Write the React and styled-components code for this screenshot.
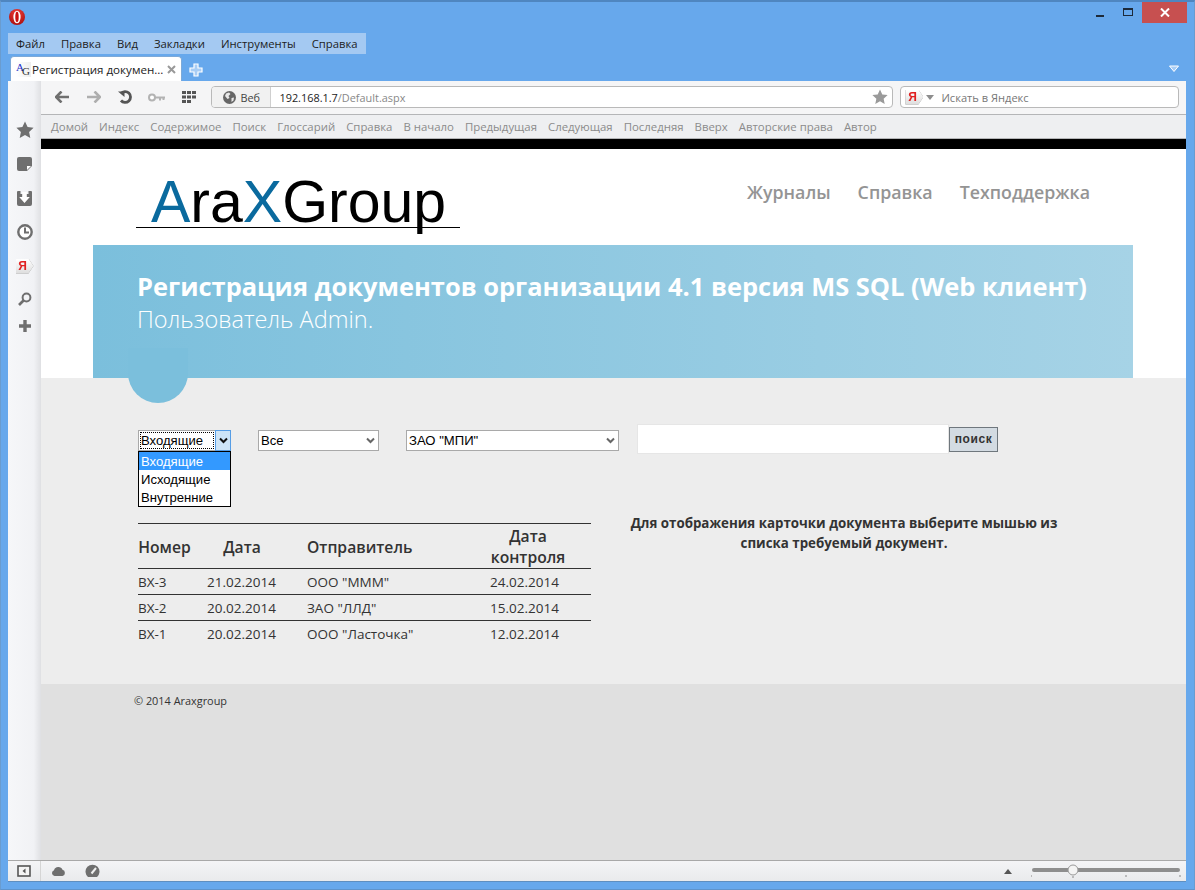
import React from 'react';
import styled, { createGlobalStyle } from 'styled-components';

const Global = createGlobalStyle`
  html, body { margin: 0; padding: 0; height: 100%; overflow: hidden; }
  * { box-sizing: border-box; }
  body { font-family: "Open Sans", "Noto Sans", sans-serif; }
`;

const Window = styled.div`
  width: 1195px; height: 890px; display: flex; flex-direction: column;
  background: #67a8ec; border-top: 2px solid #4f86c0; border-left: 1px solid #6a9ccf;
  border-right: 1px solid #6a9ccf; border-bottom: 1px solid #5f94cc; overflow: hidden;
`;
const TitleBar = styled.div`
  height: 31px; display: flex; justify-content: space-between; padding: 0 7px 0 8px;
`;
const OperaLogo = styled.div`
  width: 16px; height: 16px; margin-top: 7px; display: flex;
`;
const WindowControls = styled.div`
  display: flex; align-items: flex-start; height: 21px; margin-top: 0;
`;
const ControlButton = styled.div`
  width: ${p => p.$w}px; height: 21px; display: flex; align-items: center; justify-content: center;
  background: ${p => p.$close ? '#c75050' : 'transparent'};
`;
const MenuBar = styled.nav`
  margin-left: 7px; width: 358px; height: 21px; background: #a4c9f2; display: flex;
  align-items: center; padding: 0 8px; gap: 16px; font-size: 11.3px; color: #1d1d1d;
`;
const MenuItem = styled.span``;
const TabStrip = styled.div`
  height: 27px; display: flex; align-items: flex-end; padding: 0 14px 0 9px; position: relative;
`;
const Tab = styled.div`
  width: 172px; height: 25px; background: #fff; border-radius: 4px 4px 0 0; display: flex;
  align-items: center; padding: 0 5px 0 5px; font-size: 11.6px; color: #222; white-space: nowrap;
  border: 1px solid #7da9d8; border-bottom: none;
`;
const FavIcon = styled.span`
  width: 15px; height: 15px; flex: none; margin-right: 1px; font-family: "Liberation Serif", serif;
  font-size: 11px; position: relative; display: block; background: linear-gradient(90deg,#fff,#eee);
`;
const FavA = styled.span`position: absolute; left: 0; top: -1px; color: #2230c8;`;
const FavG = styled.span`position: absolute; left: 6px; top: 3px; color: #333;`;
const TabTitle = styled.span`flex: 1; overflow: hidden;`;
const NewTab = styled.div`margin: 0 0 4px 7px; width: 14px; height: 14px; display: flex;`;
const StripSpacer = styled.div`flex: 1;`;
const StripMenu = styled.div`margin-bottom: 8px; width: 12px; height: 8px; display: flex;`;
const Workspace = styled.div`
  flex: 1; margin: 0 8px 7px 7px; display: flex; flex-direction: column; min-height: 0;
  border-bottom: 1px solid #5f8fc0;
`;
const WorkRow = styled.div`flex: 1; display: flex; min-height: 0;`;
const Sidebar = styled.aside`
  width: 33px; flex: none; background: linear-gradient(90deg, #f6f7f9 0%, #f1f2f5 78%, #dfe0e3 100%);
  display: flex; flex-direction: column; align-items: center; padding-top: 32px;
`;
const SideIcon = styled.div`
  height: ${p => p.$h || 34}px; width: 100%; display: flex; align-items: center; justify-content: center; flex: none;
`;
const Main = styled.div`flex: 1; min-width: 0; display: flex; flex-direction: column;`;
const Toolbar = styled.div`
  height: 34px; flex: none; background: #f5f5f6; border-bottom: 1px solid #b4b5b7; display: flex; align-items: center;
  padding: 0 7px 1px 5px;
`;
const ToolButton = styled.div`
  width: 31.7px; height: 20px; display: flex; align-items: center; justify-content: center; flex: none;
`;
const AddressBar = styled.div`
  margin-left: 7px; flex: none; width: 682px; height: 22px; border: 1px solid #b9b9b9; border-radius: 4px;
  background: #fff; display: flex; align-items: stretch; overflow: hidden;
`;
const AddressMode = styled.div`
  width: 59px; flex: none; background: #f1f1f1; border-right: 1px solid #cfcfcf; display: flex; align-items: center;
  padding-left: 11px; gap: 4px; font-size: 10.9px; color: #444;
`;
const AddressText = styled.div`
  flex: 1; display: flex; align-items: center; padding-left: 8px; font-size: 10.9px; color: #888;
`;
const Host = styled.span`color: #1c1c1c;`;
const AddressStar = styled.div`width: 24px; display: flex; align-items: center; justify-content: center; flex: none;`;
const SearchBar = styled.div`
  margin-left: 7px; flex: 1; height: 22px; border: 1px solid #b9b9b9; border-radius: 4px; background: #fff;
  display: flex; align-items: center; padding-left: 4px; font-size: 11.1px; color: #777;
`;
const BadgeOutline = styled.span`
  display: flex; flex: none; filter: drop-shadow(0 0 .7px #8a8a8a);
`;
const YandexBadge = styled.span`
  width: 18px; height: 15px; flex: none; background: linear-gradient(#fff,#dcdcdc);
  clip-path: polygon(0 0, 72% 0, 100% 50%, 72% 100%, 0 100%); color: #e02020; font: bold 12px "Liberation Sans", sans-serif;
  display: flex; align-items: center; justify-content: center; padding-right: 4px;
`;
const SearchCaret = styled.span`
  width: 0; height: 0; border: 4px solid transparent; border-top: 5px solid #8d8d8d; border-bottom: none; margin: 0 7px 0 3px;
`;
const BookmarkBar = styled.div`
  height: 24px; flex: none; background: #eeeff1; border-bottom: 1px solid #b4b5b7; display: flex; align-items: center;
  padding: 0 0 1px 10px; gap: 11px; font-size: 11.4px; color: #8b8b8b; white-space: nowrap;
`;
const Page = styled.main`
  flex: 1; min-height: 0; display: flex; flex-direction: column; border-top: 10px solid #000; background: #ededed;
`;
const Header = styled.header`background: #fff; flex: none;`;
const HeaderTop = styled.div`
  height: 96px; display: flex; justify-content: space-between; align-items: flex-start;
  padding: 0 96px 0 95px;
`;
const Logo = styled.div`
  margin-top: 19px; width: 324px; height: 60px; border-bottom: 1px solid #000; padding-left: 15px;
  font: 59px/69px "Liberation Sans", Arial, sans-serif; color: #000; white-space: nowrap;
`;
const LogoAccent = styled.span`color: #0a6a9e;`;
const TopNav = styled.nav`
  display: flex; gap: 27px; margin-top: 31px; font-size: 17.8px; font-weight: 600; color: #949494;
`;
const Banner = styled.div`
  margin: 0 53px 0 52px; height: 133px; background: linear-gradient(90deg, #7bbfdc, #a6d3e6);
  padding: 22px 0 0 44px; color: #fff; position: relative;
`;
const BannerTitle = styled.div`font-size: 25.45px; line-height: 38px; font-weight: 700; white-space: nowrap;`;
const BannerSub = styled.div`font-size: 23.5px; line-height: 28px; font-weight: 300;`;
const BannerCircle = styled.div`
  position: absolute; left: 35px; top: 103px; width: 60px; height: 55px; border-radius: 0 0 30px 30px;
  background: #7bbfdc;
`;
const Content = styled.section`
  flex: none; height: 306px; padding: 46px 0 0 97px;
`;
const FilterRow = styled.div`display: flex; align-items: center; height: 30px; position: relative;`;
const Select = styled.div`
  width: ${p => p.$w}px; height: 21px; margin: 2px ${p => p.$gap || 0}px 0 0; flex: none; border: 1px solid #a9a9a9; background: #fff;
  display: flex; align-items: center; font: 13.1px "Liberation Sans", Arial, sans-serif; color: #000; padding-left: 2px; position: relative;
`;
const SelectText = styled.span`flex: 1;`;
const FocusText = styled.span`
  flex: none; width: 74px; height: 17px; border: 1px dotted #000; line-height: 15px; padding-left: 0; margin-left: -1px;
`;
const SelectArrow = styled.span`width: 15px; height: 100%; display: flex; align-items: center; justify-content: center; flex: none;`;
const SelectButton = styled.span`
  width: 16px; height: 21px; margin: -1px -1px -1px auto; display: flex; align-items: center; justify-content: center;
  background: #cde4f7; border: 1px solid #569de5; flex: none;
`;
const Dropdown = styled.ul`
  position: absolute; left: -1px; top: 20px; width: 93px; margin: 0; padding: 0; list-style: none; background: #fff;
  border: 1px solid #000; z-index: 2;
`;
const DropItem = styled.li`
  height: 18px; line-height: 19px; padding-left: 2px; background: ${p => p.$active ? '#3399ff' : 'transparent'};
  color: ${p => p.$active ? '#fff' : '#000'};
`;
const SearchInput = styled.input`
  width: 312px; height: 30px; flex: none; border: 1px solid #e6e6e6; background: #fff; padding: 0; margin: 0; outline: none;
`;
const SearchButton = styled.button`
  width: 49px; height: 25px; flex: none; background: #d3dbe2; border: 1px solid #6f777d; padding: 0;
  font: bold 12px "Liberation Sans", Arial, sans-serif; color: #333; letter-spacing: .6px;
`;
const Columns = styled.div`display: flex; margin-top: 69px; align-items: flex-start;`;
const DocTable = styled.table`
  width: 453px; flex: none; border-collapse: collapse; table-layout: fixed; color: #333; font-size: 13.5px;
  border-top: 1px solid #333;
`;
const HeadCell = styled.th`
  width: ${p => p.$w}px; padding: 2px ${p => p.$pr}px 0 0; height: 45px; font-size: 15.7px; line-height: 21px; font-weight: 600;
  text-align: center; color: #333; border-bottom: 1px solid #333;
`;
const DocRow = styled.tr`
  &:not(:last-child) td { border-bottom: 1px solid #333; }
`;
const DocCell = styled.td`padding: 0; height: 26px; white-space: nowrap;`;
const Hint = styled.p`
  width: 430px; margin: -10px 0 0 38px; text-align: center; font-size: 13.33px; line-height: 20px; font-weight: 700; color: #333;
`;
const Footer = styled.footer`
  flex: 1; background: #e0e0e0; padding: 9px 0 0 93px; font-size: 10.9px; line-height: 16px; color: #333;
`;
const StatusBar = styled.div`
  height: 21px; flex: none; background: linear-gradient(#f4f4f6,#e9eaec); border-top: 1px solid #a8a8a8; display: flex; align-items: center;
`;
const StatusLeft = styled.div`
  width: 33px; height: 100%; flex: none; border-right: 1px solid #d5d5d5; display: flex; align-items: center; justify-content: center;
`;
const StatusIcon = styled.div`width: 16px; height: 14px; display: flex; margin-left: ${p => p.$ml}px;`;
const StatusSpacer = styled.div`flex: 1;`;
const ZoomTriangle = styled.span`
  width: 0; height: 0; border: 4px solid transparent; border-bottom: 5px solid #555; border-top: none; margin-right: 19px;
`;
const ZoomSlider = styled.div`width: 150px; height: 14px; margin-right: 5px; display: flex;`;

const gray = '#6f6f6f';
const menu = ['Файл', 'Правка', 'Вид', 'Закладки', 'Инструменты', 'Справка'];
const links = ['Домой', 'Индекс', 'Содержимое', 'Поиск', 'Глоссарий', 'Справка', 'В начало', 'Предыдущая', 'Следующая', 'Последняя', 'Вверх', 'Авторские права', 'Автор'];
const rows = [
  ['ВХ-3', '21.02.2014', 'ООО "МММ"', '24.02.2014'],
  ['ВХ-2', '20.02.2014', 'ЗАО "ЛЛД"', '15.02.2014'],
  ['ВХ-1', '20.02.2014', 'ООО "Ласточка"', '12.02.2014'],
];
const starPath = 'M9 0.5l2.6 5.6 6 .7-4.5 4.1 1.2 6-5.3-3-5.3 3 1.2-6L.4 6.8l6-.7z';

const Chevron = ({ color = '#666' }) => (
  <svg width="9" height="7" viewBox="0 0 9 7"><path d="M1 1.5l3.5 3.5L8 1.5" fill="none" stroke={color} strokeWidth="2" /></svg>
);

export default function App() {
  return (
    <Window>
      <Global />
      <TitleBar>
        <OperaLogo>
          <svg width="16" height="16" viewBox="0 0 16 16">
            <defs>
              <radialGradient id="op" cx="50%" cy="25%" r="80%">
                <stop offset="0" stopColor="#f0403a" />
                <stop offset="1" stopColor="#a80c0c" />
              </radialGradient>
            </defs>
            <circle cx="8" cy="8" r="8" fill="url(#op)" />
            <ellipse cx="8" cy="8" rx="3.6" ry="6.300" fill="#fff" />
            <ellipse cx="8" cy="8" rx="1.700" ry="5.200" fill="#c8100f" />
          </svg>
        </OperaLogo>
        <WindowControls>
          <ControlButton $w={28}><svg width="9" height="10" viewBox="0 0 9 10"><rect y="7" width="8" height="2" fill="#1d2a3a" /></svg></ControlButton>
          <ControlButton $w={28}><svg width="10" height="10" viewBox="0 0 10 10"><rect x=".5" y=".5" width="9" height="7" fill="none" stroke="#1d2a3a" /><rect width="10" height="2" fill="#1d2a3a" /></svg></ControlButton>
          <ControlButton $w={45} $close><svg width="10" height="9" viewBox="0 0 10 9"><path d="M1 .5l8 8M9 .5l-8 8" stroke="#fff" strokeWidth="2" /></svg></ControlButton>
        </WindowControls>
      </TitleBar>
      <MenuBar>{menu.map(m => <MenuItem key={m}>{m}</MenuItem>)}</MenuBar>
      <TabStrip>
        <Tab>
          <FavIcon><FavA>A</FavA><FavG>G</FavG></FavIcon>
          <TabTitle>Регистрация докумен...</TabTitle>
          <svg width="9" height="9" viewBox="0 0 9 9"><path d="M1 1l7 7M8 1l-7 7" stroke="#999" strokeWidth="2" /></svg>
        </Tab>
        <NewTab>
          <svg width="14" height="14" viewBox="0 0 14 14"><path d="M5 1h4v4h4v4H9v4H5V9H1V5h4z" fill="#a8cdf5" stroke="#fff" strokeWidth="1.2" /></svg>
        </NewTab>
        <StripSpacer />
        <StripMenu>
          <svg width="12" height="8" viewBox="0 0 12 8"><path d="M1.5 1h9L6 6.5z" fill="#a8cdf5" stroke="#fff" /></svg>
        </StripMenu>
      </TabStrip>
      <Workspace>
        <WorkRow>
          <Sidebar>
            <SideIcon><svg width="18" height="18" viewBox="0 0 18 18"><path d={starPath} fill={gray} /></svg></SideIcon>
            <SideIcon><svg width="15" height="14" viewBox="0 0 15 14"><path d="M2 0h11a2 2 0 0 1 2 2v7l-5 5H2a2 2 0 0 1-2-2V2a2 2 0 0 1 2-2z" fill={gray} /><path d="M10 9h4l-4 4z" fill="#fff" /></svg></SideIcon>
            <SideIcon><svg width="15" height="15" viewBox="0 0 15 15"><path d="M1 0h2.5v3h8V0H14a1 1 0 0 1 1 1v12a2 2 0 0 1-2 2H2a2 2 0 0 1-2-2V1a1 1 0 0 1 1-1z" fill={gray} /><path d="M5.2 1h4.6v5h3l-5.3 6L2.200 6h3z" fill="#fff" /></svg></SideIcon>
            <SideIcon><svg width="16" height="16" viewBox="0 0 16 16"><circle cx="8" cy="8" r="6.7" fill="#fff" stroke={gray} strokeWidth="2.400" /><path d="M8 3.500V8.500H12" fill="none" stroke={gray} strokeWidth="2" /></svg></SideIcon>
            <SideIcon><BadgeOutline><YandexBadge>Я</YandexBadge></BadgeOutline></SideIcon>
            <SideIcon $h={32}><svg width="14" height="14" viewBox="0 0 14 14"><circle cx="8.500" cy="5.500" r="3.900" fill="none" stroke={gray} strokeWidth="2" /><path d="M5.500 8.500L1 13" stroke={gray} strokeWidth="2.600" /></svg></SideIcon>
            <SideIcon $h={22}><svg width="12" height="12" viewBox="0 0 12 12"><path d="M6 0v12M0 6h12" stroke={gray} strokeWidth="3.400" /></svg></SideIcon>
          </Sidebar>
          <Main>
            <Toolbar>
              <ToolButton><svg width="14" height="12" viewBox="0 0 14 12"><path d="M6.500 0.500L1 6l5.500 5.500M1.500 6H14" fill="none" stroke={gray} strokeWidth="2.600" /></svg></ToolButton>
              <ToolButton><svg width="14" height="12" viewBox="0 0 14 12"><path d="M7.500 0.500L13 6l-5.500 5.500M12.500 6H0" fill="none" stroke="#aeaeae" strokeWidth="2.600" /></svg></ToolButton>
              <ToolButton><svg width="14" height="14" viewBox="0 0 14 14"><path d="M3 3.500A5.400 5.400 0 1 1 3 10.500" fill="none" stroke="#555" strokeWidth="2.800" /><path d="M0 1.500h6.500V7z" fill="#555" /></svg></ToolButton>
              <ToolButton><svg width="18" height="9" viewBox="0 0 18 9"><circle cx="4" cy="4.500" r="3" fill="#fff" stroke="#b3b3b3" strokeWidth="2" /><path d="M7 4.500h10M12 4.500v3M15.500 4.500v2.500" stroke="#b3b3b3" strokeWidth="2" /></svg></ToolButton>
              <ToolButton><svg width="14" height="12" viewBox="0 0 14 12"><path d="M0 0h4v3H0zM5 0h4v3H5zM10 0h4v3h-4zM0 4.500h4v3H0zM5 4.500h4v3H5zM10 4.500h4v3h-4zM0 9h4v3H0zM5 9h4v3H5z" fill="#555" /></svg></ToolButton>
              <AddressBar>
                <AddressMode>
                  <svg width="13" height="13" viewBox="0 0 13 13"><circle cx="6.500" cy="6.500" r="6.500" fill="#666" /><path d="M3 2.500l3-1 1.500 1.500-2 2 1 2-2 1-2.500-3zM8.500 7l2.500-.5-.5 3-2 1.500z" fill="#e8e8e8" /></svg>
                  Веб
                </AddressMode>
                <AddressText><Host>192.168.1.7</Host>/Default.aspx</AddressText>
                <AddressStar><svg width="16" height="16" viewBox="0 0 18 18"><path d={starPath} fill="#9a9a9a" /></svg></AddressStar>
              </AddressBar>
              <SearchBar>
                <BadgeOutline><YandexBadge>Я</YandexBadge></BadgeOutline>
                <SearchCaret />
                Искать в Яндекс
              </SearchBar>
            </Toolbar>
            <BookmarkBar>{links.map(l => <span key={l}>{l}</span>)}</BookmarkBar>
            <Page>
              <Header>
                <HeaderTop>
                  <Logo><LogoAccent>A</LogoAccent>ra<LogoAccent>X</LogoAccent>Group</Logo>
                  <TopNav><span>Журналы</span><span>Справка</span><span>Техподдержка</span></TopNav>
                </HeaderTop>
                <Banner>
                  <BannerTitle>Регистрация документов организации 4.1 версия MS SQL (Web клиент)</BannerTitle>
                  <BannerSub>Пользователь Admin.</BannerSub>
                  <BannerCircle />
                </Banner>
              </Header>
              <Content>
                <FilterRow>
                  <Select $w={93} $gap={27}>
                    <FocusText>Входящие</FocusText>
                    <SelectButton><Chevron color="#111" /></SelectButton>
                    <Dropdown>
                      <DropItem $active>Входящие</DropItem>
                      <DropItem>Исходящие</DropItem>
                      <DropItem>Внутренние</DropItem>
                    </Dropdown>
                  </Select>
                  <Select $w={121} $gap={27}><SelectText>Все</SelectText><SelectArrow><Chevron /></SelectArrow></Select>
                  <Select $w={213} $gap={18}><SelectText>ЗАО "МПИ"</SelectText><SelectArrow><Chevron /></SelectArrow></Select>
                  <SearchInput aria-label="Поиск" />
                  <SearchButton>поиск</SearchButton>
                </FilterRow>
                <Columns>
                  <DocTable>
                    <thead>
                      <tr>
                        <HeadCell $w={69} $pr={16}>Номер</HeadCell>
                        <HeadCell $w={100} $pr={30}>Дата</HeadCell>
                        <HeadCell $w={183} $pr={78}>Отправитель</HeadCell>
                        <HeadCell $w={101} $pr={25}>Дата контроля</HeadCell>
                      </tr>
                    </thead>
                    <tbody>
                      {rows.map(r => (
                        <DocRow key={r[0]}>{r.map((c, i) => <DocCell key={i}>{c}</DocCell>)}</DocRow>
                      ))}
                    </tbody>
                  </DocTable>
                  <Hint>Для отображения карточки документа выберите мышью из списка требуемый документ.</Hint>
                </Columns>
              </Content>
              <Footer>© 2014 Araxgroup</Footer>
            </Page>
          </Main>
        </WorkRow>
        <StatusBar>
          <StatusLeft>
            <svg width="14" height="12" viewBox="0 0 14 12"><rect x="1" y="1" width="12" height="10" fill="#f4f4f4" stroke="#555" strokeWidth="1.600" /><path d="M8.500 3.500v5L5.500 6z" fill="#555" /></svg>
          </StatusLeft>
          <StatusIcon $ml={10}>
            <svg width="15" height="14" viewBox="0 0 15 14"><path d="M3.500 12A3 3 0 0 1 3 6.200 4.500 4.500 0 0 1 11.500 5.800 3.200 3.200 0 0 1 11.500 12z" fill={gray} /></svg>
          </StatusIcon>
          <StatusIcon $ml={18}>
            <svg width="15" height="14" viewBox="0 0 15 14"><path d="M3 13A7 7 0 1 1 12 13z" fill={gray} /><path d="M6.500 9.500L11 4" stroke="#f0f0f0" strokeWidth="2" /></svg>
          </StatusIcon>
          <StatusSpacer />
          <ZoomTriangle />
          <ZoomSlider>
            <svg width="150" height="14" viewBox="0 0 150 14">
              <rect x="1" y="4" width="148" height="4" rx="2" fill="#8e8e8e" />
              <path d="M0 11v2M42 12v2M95 11v2M149 11v2" stroke="#888" />
              <circle cx="42" cy="6" r="5" fill="#f4f4f4" stroke="#999" />
            </svg>
          </ZoomSlider>
        </StatusBar>
      </Workspace>
    </Window>
  );
}
